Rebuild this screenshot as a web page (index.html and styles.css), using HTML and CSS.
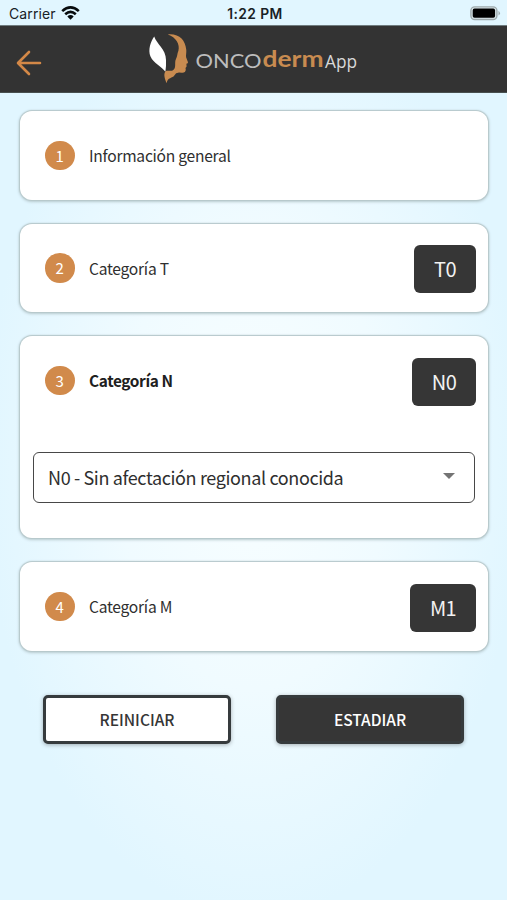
FILE: index.html
```html
<!DOCTYPE html>
<html lang="es">
<head>
<meta charset="utf-8">
<title>ONCOdermApp</title>
<link rel="stylesheet" href="styles.css">
</head>
<body>
<div class="status">
  <div class="carrier"><span>Carrier</span>
    <svg width="19" height="14" viewBox="0 0 19 14"><g fill="none" stroke="#080c0e" stroke-width="2.6"><path d="M1.2 5.1Q9.5-2.3 17.8 5.1"/><path d="M4.2 8.3Q9.5 3.6 14.8 8.3"/></g><path d="M6.3 10.4Q9.5 7.8 12.7 10.4L9.5 13.7Z" fill="#080c0e"/></svg>
  </div>
  <div class="clock">1:22 PM</div>
  <svg class="battery" width="31" height="15" viewBox="0 0 31 15"><rect x=".9" y=".9" width="26" height="12.6" rx="3.8" fill="#dce9ec" stroke="#9da9ac" stroke-width="1.4"/><rect x="2.7" y="2.6" width="22.4" height="9.2" rx="1.8" fill="#000"/><path d="M28.5 4.8Q31.4 7.2 28.5 9.6Z" fill="#9da9ac"/></svg>
</div>
<header class="bar">
  <svg class="back" width="26" height="26" viewBox="0 0 26 26"><path d="M24 13H2.2M13 2L2 13L13 24" fill="none" stroke="#d38847" stroke-width="2.6" stroke-linecap="round" stroke-linejoin="round"/></svg>
  <svg class="logo" width="212" height="52" viewBox="0 0 212 52">
    <path d="M7.2 3.4C9.6 11 19 16 19 27Q19.3 34 18.4 38.8C15 33.5 6.5 30.5 3.5 23.5C.7 16.5 3.8 8.4 7.2 3.4Z" fill="#fff"/>
    <path d="M20.9 1.4C32.5 .5 38.2 7 39.3 17C39.5 20 38.8 22 39.1 24.2L41 29.2Q41.2 30.5 39.4 30.8L39.6 33.6L38.5 35L38.8 36.8Q38.4 40.2 34.7 39.8L32 39.5Q28.6 39.7 27.3 42.5C25.6 45.3 20.6 44.2 19.6 50.2C18.2 46.3 16 41.6 18.5 38.2C21 37 24.5 39 26.8 36.4C29.4 34 27.2 29.3 29 26C30.6 23 30 21 31.4 17.8C33.2 11 29 4.3 20.9 1.4Z" fill="#c88b50"/>
    <text x="48.5" y="34.6" textLength="66" lengthAdjust="spacingAndGlyphs" class="onco">ONCO</text>
    <text x="115.5" y="34.3" textLength="61" lengthAdjust="spacingAndGlyphs" class="derm">derm</text>
    <text x="178" y="34.6" textLength="32" lengthAdjust="spacingAndGlyphs" class="app">App</text>
  </svg>
</header>
<main>
  <section class="card"><div class="row"><b class="num">1</b><span class="label">Información general</span></div></section>
  <section class="card"><div class="row"><b class="num">2</b><span class="label">Categoría T</span><span class="tag t">T0</span></div></section>
  <section class="card open"><div class="row"><b class="num">3</b><span class="label strong">Categoría N</span><span class="tag n">N0</span></div>
    <div class="select"><span>N0 - Sin afectación regional conocida</span><i class="caret"></i></div>
  </section>
  <section class="card"><div class="row"><b class="num">4</b><span class="label">Categoría M</span><span class="tag m">M1</span></div></section>
  <div class="actions"><button class="reset">REINICIAR</button><button class="stage">ESTADIAR</button></div>
</main>
</body>
</html>
```
FILE: styles.css
```css
* { box-sizing: border-box; }
body {
  margin: 0;
  height: 900px;
  overflow: hidden;
  color: #2f2f2f;
  font-family: "Noto Sans CJK SC", "Noto Sans", sans-serif;
  background: radial-gradient(ellipse 270px 460px at 50% 51%, #f8feff 0%, #f0fbff 50%, #e1f6ff 100%);
}
.status {
  height: 25px;
  display: grid;
  grid-template-columns: 1fr auto 1fr;
  padding: 0 6px 0 9px;
  background: #e1f6ff;
  color: #182126;
  font: 14px/28px Inter, sans-serif;
}
.carrier { display: flex; gap: 5px; letter-spacing: .12px; }
.carrier svg { margin-top: 6px; }
.clock { font-weight: 600; font-size: 13.8px; letter-spacing: .4px; }
.battery { justify-self: end; margin-top: 6px; }
.bar {
  height: 68px;
  display: flex;
  background: #333;
  border-top: 1px solid #6f7c7f;
  border-bottom: 1px solid #48504f;
}
.back { margin: 24px 0 0 16px; }
.logo { margin: 7px 0 0 105px; }
.onco { font: 400 18.5px Lato, sans-serif; fill: #bdbdbd; }
.derm { font: 700 23px Lato, sans-serif; fill: #c88b50; }
.app { font: 400 17.5px "Open Sans", sans-serif; fill: #d8d8d8; }
main { padding: 18px 19px 0 20px; display: flex; flex-direction: column; gap: 24px; }
.card {
  height: 88.5px;
  background: #fff;
  border-radius: 12px;
  box-shadow: 0 0 1px 1px #b6c8cb, 0 1px 3px 1px #b9cbd0;
}
.card.open { height: 202px; }
.row { height: 89px; display: flex; align-items: center; padding: 0 12px 0 25px; }
.num {
  width: 29.5px;
  height: 29.5px;
  border-radius: 50%;
  background: #d18a4b;
  color: #fff;
  font-weight: 400;
  font-size: 15px;
  line-height: 29px;
  text-align: center;
}
.label { margin: -1px 0 0 14.5px; font-size: 15.6px; line-height: 24px; letter-spacing: -.26px; white-space: nowrap; }
.strong { font-weight: 700; font-size: 15.4px; letter-spacing: -.38px; color: #202020; }
.tag {
  height: 48px;
  margin: 2px 0 0 auto;
  border-radius: 6px;
  background: #363636;
  color: #f2f2f2;
  font-size: 20px;
  line-height: 48px;
  letter-spacing: -.6px;
  text-align: center;
}
.t { width: 62px; }
.n { width: 64px; }
.m { width: 66px; }
.select {
  height: 51px;
  margin: 27px 13px 0;
  border: 1.5px solid #484848;
  border-radius: 6px;
  display: flex;
  justify-content: space-between;
  padding: 0 19px 0 14px;
  font-size: 18px;
  line-height: 49px;
  letter-spacing: -.37px;
  white-space: nowrap;
}
.caret { margin-top: 20px; height: 0; border: 6px solid transparent; border-top-color: #747474; border-bottom: 0; }
.actions { display: flex; justify-content: space-between; padding: 0 24px 0 23px; margin-top: 20px; }
button {
  width: 188px;
  height: 49px;
  padding: 0 0 1px;
  border: 3px solid #363b3d;
  border-radius: 5px;
  background: #fff;
  color: #363636;
  font: 500 15.5px "Noto Sans CJK SC", "Noto Sans", sans-serif;
  letter-spacing: 0;
  box-shadow: 0 1px 4px rgba(0, 0, 0, .3);
}
.stage { background: #363636; color: #fff; }
```
